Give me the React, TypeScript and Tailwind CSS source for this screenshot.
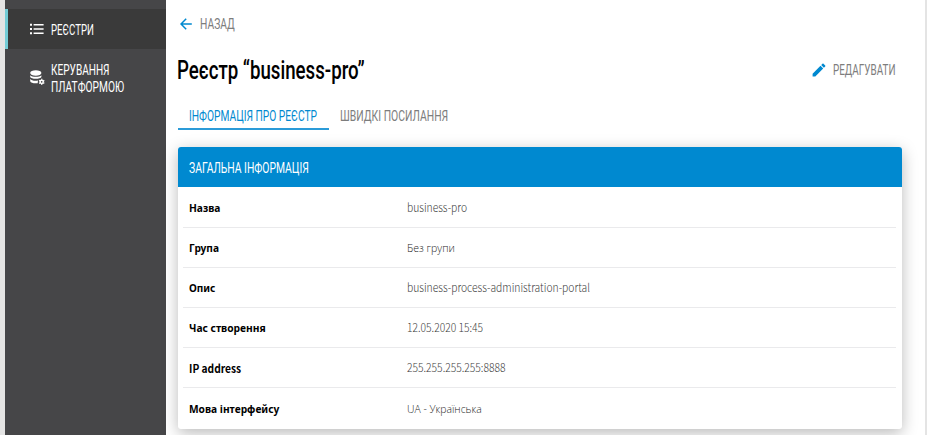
import { useLayoutEffect, useRef, useState } from "react";

type FitProps = { text: string; width: number; className: string };

/* Condensed text: the natural width is measured and squeezed to the given one. */
function Fit({ text, width, className }: FitProps) {
  const ref = useRef<HTMLSpanElement>(null);
  const [scale, setScale] = useState(1);
  useLayoutEffect(() => {
    if (ref.current) setScale(width / ref.current.offsetWidth);
  }, [width, text]);
  return (
    <span className="flex shrink-0" style={{ width }}>
      <span
        ref={ref}
        className={`block shrink-0 origin-left whitespace-pre ${className}`}
        style={{ transform: `scaleX(${scale})` }}
      >
        {text}
      </span>
    </span>
  );
}

const caps = "font-['Roboto',sans-serif] text-[15.5px] leading-[17px]";
const body = "font-['Noto_Sans_CJK_SC','Open_Sans',sans-serif]";

const rows = [
  { label: "Назва", lw: 31.5, value: "business-pro", vw: 60, latin: true },
  { label: "Група", lw: 30.5, value: "Без групи", vw: 48, latin: false },
  { label: "Опис", lw: 26.5, value: "business-process-administration-portal", vw: 183, latin: true },
  { label: "Час створення", lw: 76.5, value: "12.05.2020 15:45", vw: 76, latin: true },
  { label: "IP address", lw: 52.5, value: "255.255.255.255:8888", vw: 98.5, latin: true },
  { label: "Мова інтерфейсу", lw: 90, value: "UA - Українська", vw: 74.5, latin: false },
];

function ListIcon() {
  return (
    <svg className="h-[12px] w-[14px] shrink-0" viewBox="0 0 14 12" fill="white">
      <path d="M0 .7h2v2H0zM0 5h2v2H0zM0 9.3h2v2H0zM3.6 1h10v1.4h-10zM3.6 5.3h10v1.4h-10zM3.6 9.6h10V11h-10z" />
    </svg>
  );
}

function DatabaseIcon() {
  return (
    <svg className="h-[16px] w-[16px] shrink-0" viewBox="0 0 16 16" fill="white">
      <ellipse cx="5.8" cy="3" rx="5.6" ry="2.7" />
      <path d="M.2 5.2c1.8 2 9.4 2 11.2 0v1.9c-.7 2.3-10.5 2.4-11.2 0z" />
      <path d="M.2 9.1c1.4 1.7 4.7 2.100 7.800 1.500l-.3 2.600C4.500 13.600.8 13.200.2 11.300z" />
      <circle cx="11.700" cy="11.800" r="1.600" fill="none" stroke="white" strokeWidth="1.500" />
      <path
        d="M11.700 8.800v1M11.700 13.800v1M9.100 10.300l.9.500M13.400 12.800l.9.500M14.300 10.300l-.9.500M10 12.800l-.9.500"
        stroke="white"
        strokeWidth="1.400"
      />
    </svg>
  );
}

export default function App() {
  return (
    <div className="flex h-[435px] w-[927px] overflow-hidden bg-white">
      <div className="w-[5px] shrink-0 bg-[#e4e4e4]" />
      <aside className="w-[161px] shrink-0 bg-[#464648] pt-[9px] text-white">
        <div className="flex h-10 items-center border-l-[3px] border-[#74ccd6] bg-[#3a3a3a] pl-[22px]">
          <ListIcon />
          <div className="ml-[7px] pt-[3px]">
            <Fit text="РЕЄСТРИ" width={43} className={caps} />
          </div>
        </div>
        <div className="flex pl-[25px] pt-[13px]">
          <div className="w-[21px] pt-[8px]">
            <DatabaseIcon />
          </div>
          <div>
            <Fit text="КЕРУВАННЯ" width={58.5} className={caps} />
            <Fit text="ПЛАТФОРМОЮ" width={73} className={caps} />
          </div>
        </div>
      </aside>
      <main className="min-w-0 flex-1 pl-[11.5px]">
        <div className="flex h-[48px] items-center text-[#7d7d7d]">
          <svg className="mb-px ml-[2.5px] mr-[8px] h-[12px] w-[12px]" viewBox="0 0 12 12" fill="none" stroke="#0089d0" strokeWidth="1.5">
            <path d="M11.800 6H1.200M6.200.8 1 6l5.200 5.200" />
          </svg>
          <Fit text="НАЗАД" width={34.5} className={caps} />
        </div>
        <div className="flex h-[44px] items-center justify-between pr-[29px]">
          <div className="-ml-px">
            <Fit
              text="Реєстр “business-pro”"
              width={187.5}
              className="font-['Roboto',sans-serif] text-[25.5px] leading-[36px] font-medium text-black"
            />
          </div>
          <div className="flex items-center text-[#7d7d7d]">
            <svg className="mb-px mr-[7px] h-[14px] w-[14px]" viewBox="0 0 14 14" fill="#0089d0">
              <path d="M.6 10.700v2.700h2.700l7.900-7.900-2.700-2.700zM13.200 3.500c.3-.3.3-.7 0-1L11.500.8c-.3-.3-.7-.3-1 0L9.200 2.100l2.700 2.700z" />
            </svg>
            <Fit text="РЕДАГУВАТИ" width={62.5} className={caps} />
          </div>
        </div>
        <div className="mt-[9px] flex h-[29px]">
          <div className="flex w-[151.5px] items-center justify-center border-b-2 border-[#2b9bd8] pt-[3px] text-[#0089d0]">
            <Fit text="ІНФОРМАЦІЯ ПРО РЕЄСТР" width={128} className={caps} />
          </div>
          <div className="ml-[11px] flex items-center pt-px text-[#7d7d7d]">
            <Fit text="ШВИДКІ ПОСИЛАННЯ" width={108} className={caps} />
          </div>
        </div>
        <section className="mt-[17px] h-[282px] w-[724px] rounded-[3px] bg-white shadow-[0_4px_16px_rgba(0,0,0,0.28)]">
          <div className="flex h-10 items-center rounded-t-[3px] bg-[#0089d0] pl-[11.5px] pt-[2px] text-white">
            <Fit text="ЗАГАЛЬНА ІНФОРМАЦІЯ" width={119.5} className={caps} />
          </div>
          <div className="px-[5.5px] pt-[0.4px]">
            {rows.map((row) => (
              <div
                key={row.label}
                className="flex h-[40.2px] items-center border-b border-[#eaeaec] pl-[6px] pt-[1.5px] last:border-b-0"
              >
                <div className="w-[218px]">
                  <Fit
                    text={row.label}
                    width={row.lw}
                    className={
                      row.label === "IP address"
                        ? `${body} text-[11.5px] leading-[16px] font-bold text-black`
                        : "font-['Noto_Sans',sans-serif] text-[11px] leading-[16px] font-bold text-black"
                    }
                  />
                </div>
                <Fit
                  text={row.value}
                  width={row.vw}
                  className={
                    row.latin
                      ? `${body} text-[11.5px] leading-[14px] pb-[2px] font-light text-[#3c3c3c]`
                      : "font-['Open_Sans',sans-serif] text-[11px] leading-[16px] font-light text-[#1c1c1c]"
                  }
                />
              </div>
            ))}
          </div>
        </section>
      </main>
      <div className="w-[2.5px] shrink-0 bg-[#e4e4e4]" />
    </div>
  );
}
